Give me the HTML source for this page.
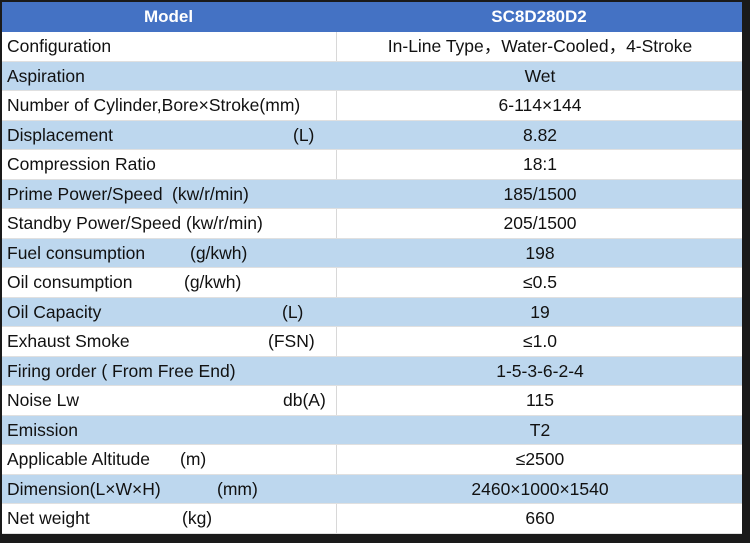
<!DOCTYPE html>
<html><head><style>
body{margin:0;width:750px;height:543px;background:#1a1a1a;overflow:hidden;font-family:"Liberation Sans",Arial,sans-serif;font-size:17.5px;color:#111;position:relative}
.r{position:absolute;left:2px;width:740px;height:29.5px;line-height:29px;background:#fff;border-bottom:1px solid #e0e0e0;box-sizing:border-box}
.r.b{background:#bdd7ee}
.l{position:absolute;left:5px;top:0;white-space:pre}
.u{position:absolute;top:0;white-space:pre}
.v{position:absolute;left:334px;width:406px;text-align:center;top:0;height:100%;border-left:1px solid #d8d8d8}
.b .v{border-left-color:#bdd7ee}
.h{top:2px;height:30px;line-height:30px;background:#4472c4;color:#fff;font-weight:bold;font-size:17px;border:0}
</style></head><body>
<div class="r h"><span class="l" style="left:0;width:333px;text-align:center">Model</span><span class="v" style="border:0">SC8D280D2</span></div>
<div class="r" style="top:32px"><span class="l">Configuration</span><span class="v">In-Line Type，Water-Cooled，4-Stroke</span></div>
<div class="r b" style="top:61.5px"><span class="l">Aspiration</span><span class="v">Wet</span></div>
<div class="r" style="top:91px"><span class="l">Number of Cylinder,Bore×Stroke(mm)</span><span class="v">6-114×144</span></div>
<div class="r b" style="top:120.5px"><span class="l">Displacement</span><span class="u" style="left:291px">(L)</span><span class="v">8.82</span></div>
<div class="r" style="top:150px"><span class="l">Compression Ratio</span><span class="v">18:1</span></div>
<div class="r b" style="top:179.5px"><span class="l">Prime Power/Speed</span><span class="u" style="left:170px">(kw/r/min)</span><span class="v">185/1500</span></div>
<div class="r" style="top:209px"><span class="l">Standby Power/Speed (kw/r/min)</span><span class="v">205/1500</span></div>
<div class="r b" style="top:238.5px"><span class="l">Fuel consumption</span><span class="u" style="left:188px">(g/kwh)</span><span class="v">198</span></div>
<div class="r" style="top:268px"><span class="l">Oil consumption</span><span class="u" style="left:182px">(g/kwh)</span><span class="v">≤0.5</span></div>
<div class="r b" style="top:297.5px"><span class="l">Oil Capacity</span><span class="u" style="left:280px">(L)</span><span class="v">19</span></div>
<div class="r" style="top:327px"><span class="l">Exhaust Smoke</span><span class="u" style="left:266px">(FSN)</span><span class="v">≤1.0</span></div>
<div class="r b" style="top:356.5px"><span class="l">Firing order ( From Free End)</span><span class="v">1-5-3-6-2-4</span></div>
<div class="r" style="top:386px"><span class="l">Noise Lw</span><span class="u" style="left:281px">db(A)</span><span class="v">115</span></div>
<div class="r b" style="top:415.5px"><span class="l">Emission</span><span class="v">T2</span></div>
<div class="r" style="top:445px"><span class="l">Applicable Altitude</span><span class="u" style="left:178px">(m)</span><span class="v">≤2500</span></div>
<div class="r b" style="top:474.5px"><span class="l">Dimension(L×W×H)</span><span class="u" style="left:215px">(mm)</span><span class="v">2460×1000×1540</span></div>
<div class="r" style="top:504px"><span class="l">Net weight</span><span class="u" style="left:180px">(kg)</span><span class="v">660</span></div>
</body></html>
